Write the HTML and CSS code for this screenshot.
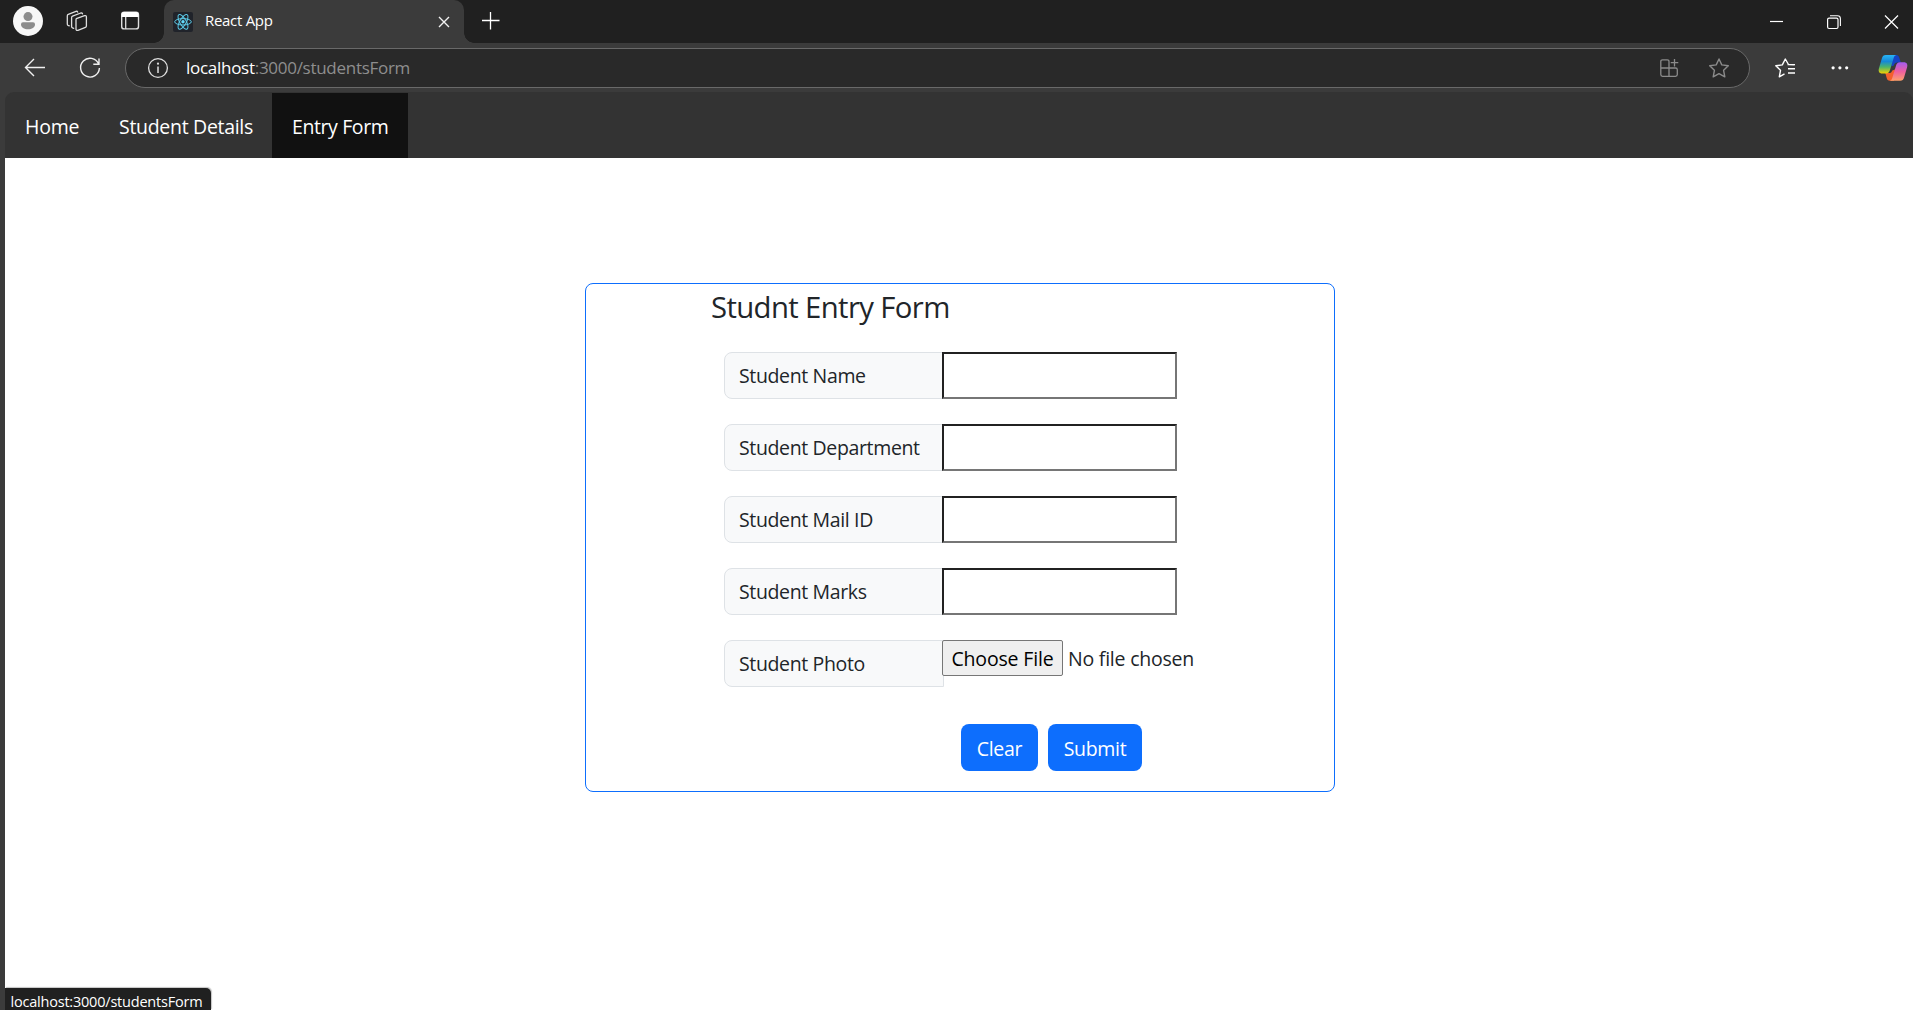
FILE: index.html
```
<!DOCTYPE html>
<html lang="en">
<head>
<meta charset="utf-8">
<title>React App</title>
<link rel="stylesheet" href="styles.css">
</head>
<body>
<div class="browser">
  <header class="titlebar">
    <svg class="icon avatar" viewBox="0 0 32 32"><circle cx="16" cy="16" r="15" fill="#f7f7f7"/><circle cx="16" cy="11.600" r="4.500" fill="#8c8c8c"/><path d="M9 19.300q0-2 2-2h10q2 0 2 2c0 3.500-3.200 5-7 5s-7-1.500-7-5z" fill="#8c8c8c"/></svg>
    <svg class="icon workspaces" viewBox="0 0 32 32"><g fill="none" stroke="#dedede" stroke-width="1.300" stroke-linejoin="round" stroke-linecap="round"><path d="M15.300 13.700l8.300-3q1.800-.5 1.800 1.200v9q0 1-1 1.400l-7.500 3q-1.900.6-1.900-1.200v-9q0-1 .3-1.400z"/><path d="M12.700 23.300l-1.200-.4q-.9-.3-.9-1.400v-8.700q0-1.200 1-1.600l8.200-3.200q1.300-.3 1.700.8"/><path d="M8.300 20.800l-1.200-.5q-.8-.4-.8-1.400v-8q0-1.200 1-1.600l7.700-3q1.300-.3 1.700.8"/></g></svg>
    <svg class="icon tab-actions" viewBox="0 0 32 32"><rect x="7.700" y="7.300" width="16.800" height="16.600" rx="2.500" fill="none" stroke="#dedede" stroke-width="1.400"/><path d="M7.500 12V9.500q0-2.500 2.500-2.500h12q2.500 0 2.500 2.500V12z" fill="#fff"/><path d="M11.700 12v12" stroke="#dedede" stroke-width="1.300"/></svg>
    <div class="tab">
      <svg class="favicon" viewBox="0 0 20 20"><rect width="20" height="20" rx="2" fill="#20232a"/><g fill="none" stroke="#5ccbe8" stroke-width="1"><ellipse cx="10" cy="9.800" rx="8.300" ry="3.200"/><ellipse cx="10" cy="9.800" rx="8.300" ry="3.200" transform="rotate(60 10 9.800)"/><ellipse cx="10" cy="9.800" rx="8.300" ry="3.200" transform="rotate(120 10 9.800)"/></g><circle cx="10" cy="9.800" r="1.700" fill="#61dafb"/></svg>
      <span class="tab-title">React App</span>
      <svg class="tab-close" viewBox="0 0 12 12"><path d="M1 1l10 10M11 1L1 11" stroke="#f2f2f2" stroke-width="1.400"/></svg>
    </div>
    <svg class="icon new-tab" viewBox="0 0 32 32"><path d="M7 15.500h17.500M15.500 7v17.500" stroke="#fff" stroke-width="1.300"/></svg>
    <div class="window-controls">
      <svg class="icon" viewBox="0 0 32 32"><path d="M9 15.500h13" stroke="#fff" stroke-width="1.200"/></svg>
      <svg class="icon" viewBox="0 0 32 32"><rect x="9.600" y="12.100" width="10.400" height="10.400" rx="1.500" fill="none" stroke="#fff" stroke-width="1.200"/><path d="M12 9.800h7.500q2.900 0 2.900 2.900V20" fill="none" stroke="#fff" stroke-width="1.100"/></svg>
      <svg class="icon last" viewBox="0 0 32 32"><path d="M9 9.500l13 13M22 9.500L9 22.500" stroke="#fff" stroke-width="1.200"/></svg>
    </div>
  </header>

  <div class="toolbar">
    <svg class="icon back" viewBox="0 0 32 32"><path d="M26 15.500H6.500M15 7L6.500 15.500 15 24" fill="none" stroke="#f0f0f0" stroke-width="1.400"/></svg>
    <svg class="icon reload" viewBox="0 0 32 32"><path d="M24.600 11.800A9.400 9.400 0 1 0 25.400 16M25 6.500v5.700h-5.700" fill="none" stroke="#f0f0f0" stroke-width="1.400"/></svg>
    <div class="address">
      <svg class="icon" viewBox="0 0 32 32"><circle cx="16" cy="16" r="9.400" fill="none" stroke="#e0e0e0" stroke-width="1.300"/><path d="M16 14.500v6.500" stroke="#e0e0e0" stroke-width="1.500"/><circle cx="16" cy="11.700" r="1.100" fill="#e0e0e0"/></svg>
      <span class="url"><b>localhost</b>:3000/studentsForm</span>
      <svg class="icon" viewBox="0 0 32 32"><g fill="none" stroke="#8b8b8b" stroke-width="1.300"><path d="M16 16V9.500q0-1.700-1.700-1.700H9.500q-1.700 0-1.700 1.700V22.500q0 1.800 1.700 1.800h13q1.800 0 1.800-1.800v-4.700q0-1.800-1.800-1.800H7.800M16 16v8.300M21.500 7v7.500M17.700 10.700h7.600"/></g></svg>
      <svg class="icon star" viewBox="0 0 32 32"><path d="M16 7l2.800 5.900 6.500.9-4.700 4.500 1.200 6.500-5.800-3.100-5.800 3.100 1.200-6.500-4.700-4.500 6.500-.9z" fill="none" stroke="#8b8b8b" stroke-width="1.400" stroke-linejoin="round"/></svg>
    </div>
    <svg class="icon favorites" viewBox="0 0 32 32"><path d="M25.500 12.800l-6-.3L16.300 7l-3 5.900-6.500.9 4.700 4.500-1.200 6.500 5.200-2.900M18.500 12.600H26M19 16.800h7M19 21h7" fill="none" stroke="#fff" stroke-width="1.400" stroke-linejoin="round"/></svg>
    <svg class="icon more" viewBox="0 0 32 32"><g fill="#fff"><circle cx="9.100" cy="15.800" r="1.600"/><circle cx="15.900" cy="15.800" r="1.600"/><circle cx="22.700" cy="15.800" r="1.600"/></g></svg>
    <svg class="icon copilot" viewBox="0 0 32 32">
      <defs>
        <linearGradient id="cool" x1="0" y1="0" x2="0" y2="1"><stop offset="0" stop-color="#28b5f5"/><stop offset=".35" stop-color="#1688d8"/><stop offset=".65" stop-color="#4cb56a"/><stop offset="1" stop-color="#f5d000"/></linearGradient>
        <linearGradient id="warm" x1="0" y1="0" x2="0" y2="1"><stop offset="0" stop-color="#a45cf0"/><stop offset=".5" stop-color="#ee5fa0"/><stop offset="1" stop-color="#ffa16b"/></linearGradient>
      </defs>
      <path d="M15 3h4.200c1.800 0 2.500 1 3 2.600l1.600 5h-3.500c-2 0-3 1-3.500 3l-2.500 1z" fill="#1643c4"/>
      <path d="M17 28.700h-4.200c-1.800 0-2.600-1-3.100-2.700L8.300 21h3.500c2 0 3-1 3.500-2.600l2.700-1z" fill="#f4602c"/>
      <path d="M8.800 3h10.500c-1.500.4-2.200 1.500-2.700 3.200L13 18c-.6 1.900-1.700 3.500-4 3.500H5.300c-3.300 0-4.100-2.200-3.400-5L5 6c.6-2 1.600-3 3.800-3z" fill="url(#cool)"/>
      <path d="M23.200 28.800H12.700c1.500-.3 2.200-1.500 2.700-3.200L19 13.700c.6-1.900 1.700-3.400 4-3.400h3.700c3.300 0 4.100 2.200 3.400 5L27 25.800c-.6 2-1.600 3-3.800 3z" fill="url(#warm)"/>
    </svg>
  </div>

  <div class="viewport">
    <nav class="nav">
      <a class="nav-link home">Home</a>
      <a class="nav-link details">Student Details</a>
      <a class="nav-link entry active">Entry Form</a>
    </nav>
    <main class="page">
      <form class="card">
        <h4 class="card-title">Studnt Entry Form</h4>
        <div class="field"><label class="label">Student Name</label><input class="input" type="text"></div>
        <div class="field"><label class="label">Student Department</label><input class="input" type="text"></div>
        <div class="field"><label class="label">Student Mail ID</label><input class="input" type="text"></div>
        <div class="field"><label class="label">Student Marks</label><input class="input" type="text"></div>
        <div class="field"><label class="label">Student Photo</label><button class="file-button" type="button">Choose File</button><span class="file-name">No file chosen</span></div>
        <div class="actions">
          <button class="button clear" type="button">Clear</button>
          <button class="button submit" type="button">Submit</button>
        </div>
      </form>
    </main>
    <div class="status">localhost:3000/studentsForm</div>
  </div>
</div>
</body>
</html>
```
FILE: styles.css
```
* { box-sizing: border-box; }
body {
  margin: 0;
  font-family: "Open Sans", "Noto Sans", sans-serif;
  font-size: 19.5px;
  letter-spacing: -0.3px;
  color: #212529;
}
button, input { font: inherit; letter-spacing: inherit; margin: 0; padding: 0; }
.browser { display: flex; flex-direction: column; height: 1010px; overflow: hidden; background: #3b3b3b; }
.icon { width: 32px; height: 32px; flex: none; display: block; }

.titlebar { display: flex; align-items: center; height: 43px; background: #202020; padding: 0 5px 0 12px; }
.avatar { margin-bottom: 1px; }
.workspaces { margin-left: 17px; margin-bottom: 1px; }
.tab-actions { margin: 0 18px 1px 21px; }
.tab {
  position: relative;
  display: flex;
  align-items: center;
  width: 300px;
  height: 43px;
  padding: 0 14px 0 9px;
  background: #3b3b3b;
  border-radius: 10px 10px 0 0;
}
.tab::before, .tab::after { content: ""; position: absolute; bottom: 0; width: 10px; height: 10px; }
.tab::before { left: -10px; background: radial-gradient(circle at 0 0, #202020 9.500px, #3b3b3b 10px); }
.tab::after { right: -10px; background: radial-gradient(circle at 100% 0, #202020 9.500px, #3b3b3b 10px); }
.favicon { width: 20px; height: 20px; }
.tab-title { flex: 1; margin: 0 0 3px 12px; font-size: 15px; line-height: 22px; letter-spacing: -0.3px; color: #fff; }
.tab-close { width: 12px; height: 12px; }
.new-tab { margin: 0 0 1px 11px; }
.window-controls { display: flex; gap: 25px; margin-left: auto; }
.window-controls .last { margin-left: 1px; }

.toolbar { display: flex; align-items: center; height: 49px; padding: 0 4px 0 19px; }
.reload { margin-left: 23px; }
.address {
  display: flex;
  align-items: center;
  width: 1625px;
  height: 40px;
  margin-left: 19px;
  padding: 0 14px 0 16px;
  border: 1px solid #696969;
  border-radius: 20px;
  background: #292929;
}
.url { flex: 1; margin-left: 12px; font-size: 17px; line-height: 24px; letter-spacing: -0.28px; color: #8e8e8e; }
.url b { font-weight: 400; color: #fff; }
.star { margin-left: 18px; }
.favorites { margin-left: 19px; }
.more { margin-left: 23px; }
.copilot { margin-left: 21px; }

.viewport { position: relative; display: flex; flex-direction: column; flex: 1; margin-left: 5px; }
.nav { display: flex; height: 66px; padding-top: 1px; background: #333; border-radius: 9px 9px 0 0; }
.nav-link { padding-left: 20px; line-height: 67px; color: #fff; white-space: nowrap; }
.home { width: 94px; letter-spacing: -0.2px; }
.details { width: 173px; }
.entry { width: 136px; letter-spacing: -0.4px; }
.nav-link.active { background: #111; }

.page { flex: 1; padding: 125px 0 0 580px; background: #fff; }
.card { width: 750px; height: 509px; padding: 5px 0 0 126px; border: 1px solid #0d6efd; border-radius: 8px; }
.card-title { margin: 0 0 27px -1px; font-size: 29.300px; font-weight: 400; line-height: 36px; letter-spacing: -0.62px; }
.field { display: flex; align-items: flex-start; height: 47px; margin: 0 0 25px 12px; }
.label {
  width: 220px;
  height: 47px;
  padding-left: 14px;
  line-height: 45px;
  letter-spacing: -0.36px;
  background: #f8f9fa;
  border: 1px solid #dee2e6;
  border-radius: 8px 0 0 8px;
}
.input {
  width: 235px;
  height: 47px;
  margin-left: -2px;
  padding: 0 8px;
  background: #fff;
  border: 2px solid;
  border-color: #212121 #767676 #767676 #212121;
  border-radius: 0;
  outline: 0;
}
.file-button {
  width: 121px;
  height: 36px;
  margin-left: -2px;
  padding-top: 1px;
  line-height: 33px;
  letter-spacing: -0.15px;
  color: #000;
  background: #efefef;
  border: 1px solid #767676;
  border-radius: 2px;
}
.file-name { margin-left: 5px; line-height: 38px; letter-spacing: -0.22px; }
.actions { display: flex; gap: 10px; margin: 37px 0 0 249px; }
.button { height: 47px; padding-top: 1px; border: 0; border-radius: 8px; background: #0d6efd; color: #fff; }
.clear { width: 77px; }
.submit { width: 94px; }

.status {
  position: absolute;
  left: 0;
  bottom: 0;
  width: 206px;
  height: 22px;
  padding-left: 5.500px;
  font-size: 14.500px;
  line-height: 27px;
  letter-spacing: -0.21px;
  color: #fff;
  background: #202020;
  border-radius: 0 5px 0 0;
  box-shadow: 1px -1px 1px #c4c4c4;
  overflow: hidden;
}
```
